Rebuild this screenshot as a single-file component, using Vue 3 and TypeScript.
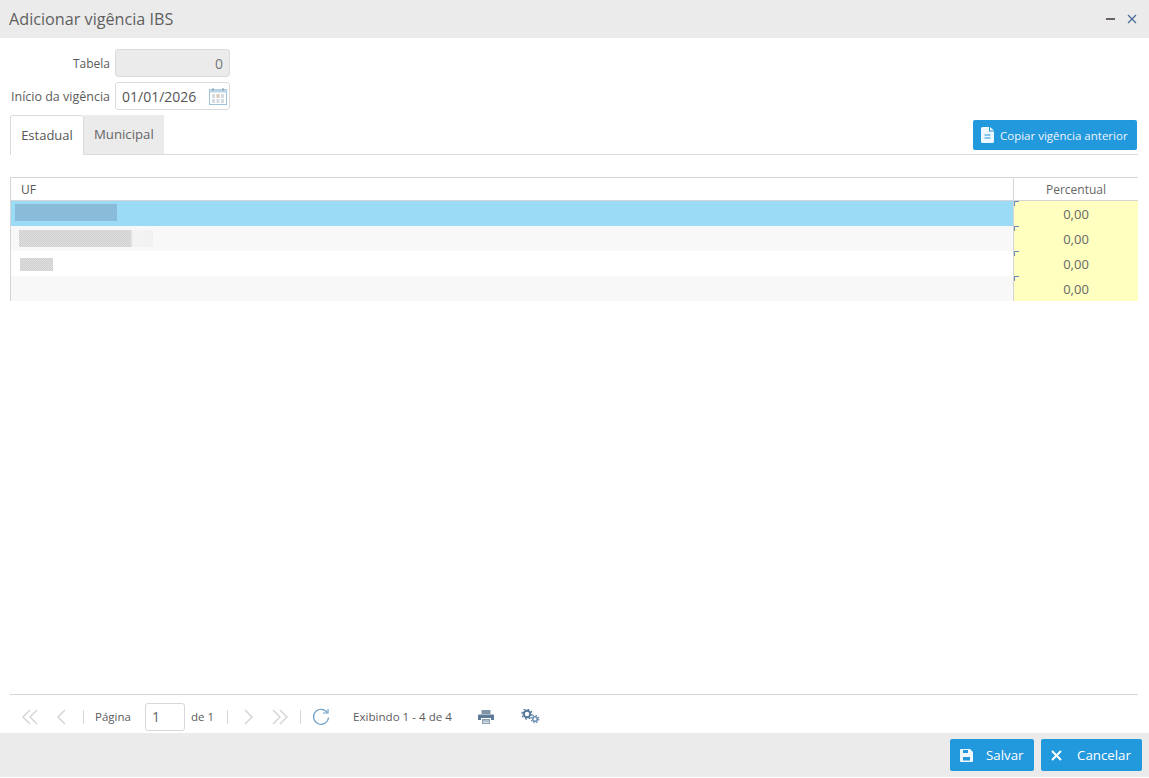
<script setup lang="ts">
const rows = [
  { id: 1, cls: 'sel', block: 'b1' },
  { id: 2, cls: 'alt', block: 'b2' },
  { id: 3, cls: '', block: 'b3' },
  { id: 4, cls: 'alt', block: '' },
]
</script>

<template>
  <div class="win">
    <header class="head">
      <span class="title">Adicionar vigência IBS</span>
      <span class="winbtns">
        <svg width="12" height="12" viewBox="0 0 12 12"><path d="M1 6h9" stroke="#6b5f68" stroke-width="2" /></svg>
        <svg width="12" height="12" viewBox="0 0 12 12"><path d="M2 2l8 8M10 2l-8 8" stroke="#4a6f96" stroke-width="1.3" /></svg>
      </span>
    </header>

    <main class="body">
      <div class="form">
        <div class="field">
          <label class="short">Tabela</label>
          <div class="inp dis">0</div>
        </div>
        <div class="field">
          <label>Início da vigência</label>
          <div class="inp date">
            <span>01/01/2026</span>
            <svg width="20" height="20" viewBox="0 0 20 20" fill="none">
              <rect x="1.500" y="3.500" width="17" height="15" fill="#fff" stroke="#9fc3d8" />
              <rect x="1.500" y="3.500" width="17" height="3" fill="#bcd8e8" />
              <path d="M5 2v3M15 2v3" stroke="#8199aa" />
              <path d="M4 9h3M8.500 9h3M13 9h3M4 11h3M8.500 11h3M13 11h3M4 14h3M8.500 14h3M13 14h3M4 16h3M8.500 16h3M13 16h3" stroke="#a9bac4" />
              <path d="M8.500 9h3M8.500 11h3" stroke="#e0c08c" />
            </svg>
          </div>
        </div>
      </div>

      <div class="tabbar">
        <div class="tab active">Estadual</div>
        <div class="tab">Municipal</div>
        <button class="btn copy">
          <svg width="13" height="16" viewBox="0 0 13 16"><path d="M0 1.500A1.500 1.500 0 0 1 1.500 0H8v4.500h5V14.500A1.500 1.500 0 0 1 11.500 16h-10A1.500 1.500 0 0 1 0 14.500zM9 0l4 3.500H9z" fill="#eef7fd" /><path d="M3.500 8h6M3.500 11h6" stroke="#2298dd" /></svg>
          Copiar vigência anterior
        </button>
      </div>

      <section class="grid">
        <div class="ghead">
          <div class="c1">UF</div>
          <div class="c2">Percentual</div>
        </div>
        <div v-for="r in rows" :key="r.id" class="row" :class="r.cls">
          <div class="c1"><i v-if="r.block" class="blk" :class="r.block"></i></div>
          <div class="c2 val">0,00</div>
        </div>
      </section>

      <div class="spacer"></div>

      <nav class="pager">
        <svg class="ic first" width="18" height="18" viewBox="0 0 18 18" fill="none"><path d="M9 2L2 9l7 7M16 2L9 9l7 7" stroke="#d6d6d6" stroke-width="1.500" /></svg>
        <svg class="ic prev" width="12" height="18" viewBox="0 0 12 18" fill="none"><path d="M10 2L3 9l7 7" stroke="#d6d6d6" stroke-width="1.500" /></svg>
        <span class="sep s1"></span>
        <span class="pg">Página</span>
        <div class="pinp">1</div>
        <span class="de">de 1</span>
        <span class="sep s2"></span>
        <svg class="ic next" width="12" height="18" viewBox="0 0 12 18" fill="none"><path d="M2 2l7 7-7 7" stroke="#d6d6d6" stroke-width="1.500" /></svg>
        <svg class="ic last" width="18" height="18" viewBox="0 0 18 18" fill="none"><path d="M2 2l7 7-7 7M9 2l7 7-7 7" stroke="#d6d6d6" stroke-width="1.500" /></svg>
        <span class="sep s3"></span>
        <svg class="ic refresh" width="18" height="18" viewBox="0 0 18 18" fill="none"><path d="M15.200 4.500A7.500 7.500 0 1 0 16.500 9.500" stroke="#6f9fc4" stroke-width="1.200" /><path d="M11 5h5V1" stroke="#6f9fc4" stroke-width="1.200" /></svg>
        <span class="info">Exibindo 1 - 4 de 4</span>
        <svg class="ic print" width="16" height="14" viewBox="0 0 16 14"><path d="M3.500 0h9v4h-9z" fill="#7d94a8" /><path d="M1 4.500h14a1 1 0 0 1 1 1V10h-3V8H3v2H0V5.500a1 1 0 0 1 1-1z" fill="#5d7a96" /><path d="M4 9h8v5H4z" fill="#8aa0b2" /><path d="M5 11h6M5 12.500h6" stroke="#fff" stroke-width=".7" /></svg>
        <svg class="ic gears" width="19" height="15" viewBox="0 0 19 15" fill="none"><circle cx="6" cy="5" r="3.200" stroke="#55779a" stroke-width="2" /><circle cx="6" cy="5" r="5" stroke="#55779a" stroke-width="1.300" stroke-dasharray="1.900 2" /><circle cx="14" cy="10" r="2.300" stroke="#6d8fb0" stroke-width="1.600" /><circle cx="14" cy="10" r="3.800" stroke="#6d8fb0" stroke-width="1.200" stroke-dasharray="1.500 1.500" /></svg>
      </nav>
    </main>

    <footer class="foot">
      <button class="btn act save">
        <svg width="13" height="13" viewBox="0 0 13 13"><path d="M1 0h9l3 3v9a1 1 0 0 1-1 1H1a1 1 0 0 1-1-1V1a1 1 0 0 1 1-1z" fill="#f1f8fd" /><path d="M3 1h5v3H3zM3 8h7v3.500H3z" fill="#2298dd" /></svg>
        <span>Salvar</span>
      </button>
      <button class="btn act cancel">
        <svg width="11" height="11" viewBox="0 0 11 11"><path d="M1 1l9 9M10 1l-9 9" stroke="#fff" stroke-width="2" /></svg>
        <span>Cancelar</span>
      </button>
    </footer>
  </div>
</template>

<style>
html, body { margin: 0; background: #fff; }
</style>

<style scoped>
.win {
  width: 1149px;
  height: 778px;
  display: flex;
  flex-direction: column;
  font-family: "Open Sans", "Noto Sans", sans-serif;
  font-size: 12.500px;
  color: #5c5c5c;
  background: #fff;
  overflow: hidden;
}
.head {
  height: 38px;
  flex: none;
  background: #ebebeb;
  display: flex;
  align-items: center;
  justify-content: space-between;
  padding: 0 11px 0 9px;
}
.title { font-size: 16.200px; color: #5f5f5f; }
.winbtns { display: flex; gap: 9px; align-items: center; }
.body {
  flex: 1;
  min-height: 0;
  display: flex;
  flex-direction: column;
  padding: 11px 11px 0 10px;
}
.form { display: flex; flex-direction: column; gap: 5px; }
.field { display: flex; align-items: center; gap: 5px; }
.field label { width: 100px; text-align: right; white-space: nowrap; }
.field label.short { font-size: 12px; }
.inp {
  width: 115px;
  height: 28px;
  box-sizing: border-box;
  border: 1px solid #dcdcdc;
  border-radius: 3px;
  font-size: 14px;
  display: flex;
  align-items: center;
  padding: 0 6px;
}
.dis { background: #ebebeb; justify-content: flex-end; color: #777; }
.date { justify-content: space-between; padding-right: 0; color: #555; }
.date svg { margin-right: 1px; }
.tabbar {
  margin-top: 5px;
  height: 40px;
  box-sizing: border-box;
  border-bottom: 1px solid #dcdcdc;
  display: flex;
  align-items: flex-start;
}
.tab {
  height: 39px;
  box-sizing: border-box;
  padding: 0 10px 2px;
  display: flex;
  align-items: center;
  font-size: 13.200px;
  background: #ebebeb;
  color: #666;
}
.tab.active {
  background: #fff;
  color: #555;
  border: 1px solid #dcdcdc;
  border-bottom: 0;
  border-radius: 3px 3px 0 0;
  height: 40px;
  width: 74px;
  justify-content: center;
  padding: 0 0 2px;
  font-size: 13px;
}
.btn {
  border: 0;
  border-radius: 2px;
  background: #2298dd;
  color: #eef7fd;
  font-family: inherit;
  display: flex;
  align-items: center;
  padding: 0;
}
.copy {
  margin-left: auto;
  margin-right: 1px;
  margin-top: 5px;
  width: 164px;
  height: 30px;
  font-size: 11.500px;
  padding-left: 8px;
  gap: 6px;
}
.grid {
  margin-top: 22px;
  border-top: 1px solid #d5d5d5;
  border-left: 1px solid #d5d5d5;
  width: 1128px;
  box-sizing: border-box;
}
.ghead {
  display: flex;
  height: 22px;
  border-bottom: 1px solid #d5d5d5;
}
.ghead .c1 { padding-left: 10px; display: flex; align-items: center; color: #555; font-size: 12px; }
.ghead .c2 { display: flex; align-items: center; justify-content: center; color: #666; border-left: 1px solid #d5d5d5; font-size: 12px; box-sizing: border-box; }
.c1 { flex: 1; min-width: 0; }
.c2 { width: 125px; flex: none; }
.row { display: flex; height: 25px; background: #fff; }
.row.alt { background: #f8f8f8; }
.row.sel { background: #9bdbf5; }
.row .c1 { position: relative; }
.val {
  position: relative;
  background: #ffffc0;
  border-left: 1px solid #d5d5d5;
  box-sizing: border-box;
  display: flex;
  align-items: center;
  justify-content: center;
  font-size: 13px;
  color: #666;
  padding-top: 1px;
}
.val::before {
  content: "";
  position: absolute;
  left: 0;
  top: 0;
  width: 4px;
  height: 4px;
  border-left: 1px solid #6c8ebf;
  border-top: 1px solid #6c8ebf;
}
.blk { position: absolute; display: block; }
.b1 { left: 4px; top: 3px; width: 102px; height: 17px; background: #88bcd8; }
.b2 {
  left: 8px;
  top: 4px;
  width: 134px;
  height: 17px;
  background: linear-gradient(90deg, transparent 0, transparent 83%, #f4f4f4 85%, #f1f1f1 100%),
    repeating-conic-gradient(#d0d0d0 0 25%, #dedede 0 50%) 0 0 / 2px 2px;
}
.b3 {
  left: 9px;
  top: 7px;
  width: 33px;
  height: 13px;
  background: repeating-conic-gradient(#d0d0d0 0 25%, #dedede 0 50%) 0 0 / 2px 2px;
}
.spacer { flex: 1; }
.pager {
  height: 39px;
  box-sizing: border-box;
  flex: none;
  border-top: 1px solid #d5d5d5;
  padding-top: 5px;
  width: 1128px;
  display: flex;
  align-items: center;
  font-size: 11.500px;
  color: #5c5c5c;
}
.ic { flex: none; }
.first { margin-left: 11px; }
.prev { margin-left: 16px; }
.sep { width: 1px; height: 14px; background: #d8d8d8; flex: none; }
.s1 { margin-left: 16px; }
.pg { margin-left: 11px; }
.pinp {
  width: 40px;
  height: 28px;
  box-sizing: border-box;
  margin-left: 14px;
  border: 1px solid #d8d8d8;
  border-radius: 3px;
  font-size: 14px;
  color: #666;
  display: flex;
  align-items: center;
  padding-left: 6px;
}
.de { margin-left: 6px; }
.s2 { margin-left: 13px; }
.next { margin-left: 15px; }
.last { margin-left: 16px; }
.s3 { margin-left: 11px; }
.refresh { margin-left: 11px; }
.info { margin-left: 23px; font-size: 11.600px; }
.print { margin-left: 26px; }
.gears { margin-left: 27px; }
.foot {
  height: 44px;
  margin-bottom: 1px;
  flex: none;
  background: #ebebeb;
  display: flex;
  justify-content: flex-end;
  align-items: flex-start;
  gap: 7px;
  padding: 6px 7px 0 0;
  box-sizing: border-box;
}
.act {
  height: 32px;
  font-size: 13.300px;
  color: #fff;
}
.save { width: 84px; padding-left: 10px; gap: 13px; }
.cancel { width: 101px; padding-left: 10px; gap: 15px; }
</style>
